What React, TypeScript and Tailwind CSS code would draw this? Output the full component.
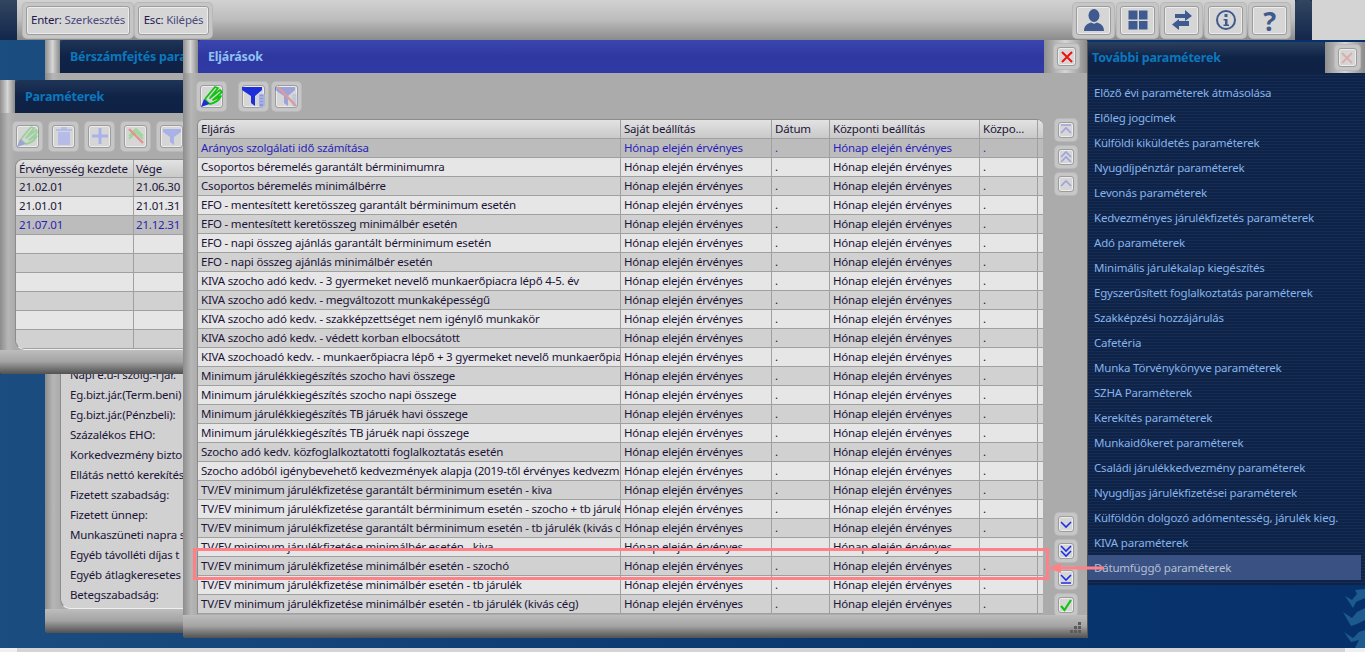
import type { ReactNode } from "react";

const font = "font-['Noto_Sans','Liberation_Sans',sans-serif] text-[11.5px] tracking-[-0.2px] leading-none";

const procedures = [
  "Arányos szolgálati idő számítása",
  "Csoportos béremelés garantált bérminimumra",
  "Csoportos béremelés minimálbérre",
  "EFO - mentesített keretösszeg garantált bérminimum esetén",
  "EFO - mentesített keretösszeg minimálbér esetén",
  "EFO - napi összeg ajánlás garantált bérminimum esetén",
  "EFO - napi összeg ajánlás minimálbér esetén",
  "KIVA szocho adó kedv. - 3 gyermeket nevelő munkaerőpiacra lépő 4-5. év",
  "KIVA szocho adó kedv. - megváltozott munkaképességű",
  "KIVA szocho adó kedv. - szakképzettséget nem igénylő munkakör",
  "KIVA szocho adó kedv. - védett korban elbocsátott",
  "KIVA szochoadó kedv. - munkaerőpiacra lépő + 3 gyermeket nevelő munkaerőpiacra",
  "Minimum járulékkiegészítés szocho havi összege",
  "Minimum járulékkiegészítés szocho napi összege",
  "Minimum járulékkiegészítés TB járuék havi összege",
  "Minimum járulékkiegészítés TB járuék napi összege",
  "Szocho adó kedv. közfoglalkoztatotti foglalkoztatás esetén",
  "Szocho adóból igénybevehető kedvezmények alapja (2019-től érvényes kedvezmények)",
  "TV/EV minimum járulékfizetése garantált bérminimum esetén - kiva",
  "TV/EV minimum járulékfizetése garantált bérminimum esetén - szocho + tb járulék",
  "TV/EV minimum járulékfizetése garantált bérminimum esetén - tb járulék (kivás cég)",
  "TV/EV minimum járulékfizetése minimálbér esetén - kiva",
  "TV/EV minimum járulékfizetése minimálbér esetén - szochó",
  "TV/EV minimum járulékfizetése minimálbér esetén - tb járulék",
  "TV/EV minimum járulékfizetése minimálbér esetén - tb járulék (kivás cég)",
];

const moreParams = [
  "Előző évi paraméterek átmásolása",
  "Előleg jogcímek",
  "Külföldi kiküldetés paraméterek",
  "Nyugdíjpénztár paraméterek",
  "Levonás paraméterek",
  "Kedvezményes járulékfizetés paraméterek",
  "Adó paraméterek",
  "Minimális járulékalap kiegészítés",
  "Egyszerűsített foglalkoztatás paraméterek",
  "Szakképzési hozzájárulás",
  "Cafetéria",
  "Munka Törvénykönyve paraméterek",
  "SZHA Paraméterek",
  "Kerekítés paraméterek",
  "Munkaidőkeret paraméterek",
  "Családi járulékkedvezmény paraméterek",
  "Nyugdíjas járulékfizetései paraméterek",
  "Külföldön dolgozó adómentesség, járulék kieg.",
  "KIVA paraméterek",
  "Dátumfüggő paraméterek",
];

const labels = [
  "Napi e.u-i szolg.-i jár.",
  "Eg.bizt.jár.(Term.beni)",
  "Eg.bizt.jár.(Pénzbeli):",
  "Százalékos EHO:",
  "Korkedvezmény bizto",
  "Ellátás nettó kerekítés",
  "Fizetett szabadság:",
  "Fizetett ünnep:",
  "Munkaszüneti napra s",
  "Egyéb távolléti díjas t",
  "Egyéb átlagkeresetes",
  "Betegszabadság:",
];

const validity = [
  ["21.02.01", "21.06.30"],
  ["21.01.01", "21.01.31"],
  ["21.07.01", "21.12.31"],
  ["", ""],
  ["", ""],
  ["", ""],
  ["", ""],
  ["", ""],
  ["", ""],
];

const Btn = ({ size, children }: { size: string; children?: ReactNode }) => (
  <div className={`${size} shrink-0 rounded-[4px] bg-[#c6c6c6] p-[3px] shadow-[0_0_0_1px_#b8b8b8]`}>
    <div className="flex h-full w-full items-center justify-center rounded-[3px] border border-[#9c9c9c] bg-[#d6d6d6] shadow-[inset_0_0_0_1px_#ececec]">
      {children}
    </div>
  </div>
);

const Pen = ({ faded }: { faded?: boolean }) => (
  <svg width="24" height="24" viewBox="0 0 24 24" fill="none" className={faded ? "opacity-30 shrink-0" : "shrink-0"}>
    <path d="M5 15 L15 3 L18 4 L10 14 L20 6 L22 8 L13 16 L21 12 C19 16 15 19 10 20" stroke="#12c312" strokeWidth="1.8" strokeLinejoin="round" />
    <path d="M5 15 C6 17 8 19 10 20" stroke="#12c312" strokeWidth="1.8" />
    <path d="M1 23 L4 15 L9.5 20 Z" fill="#1c2fd8" />
  </svg>
);

const Funnel = ({ faded }: { faded?: boolean }) => (
  <svg width="24" height="24" viewBox="0 0 24 24" className={faded ? "opacity-30 shrink-0" : "shrink-0"}>
    <path d="M0 3 H20 V6 L13 12 V22 L9 19 V12 L0 6 Z" fill="#1c2fd8" />
    <path d="M17 10 H22 V23 H17 Z M18 13 H21 M18 16 H21 M18 19 H21" fill="#8a98e0" stroke="#cfd4ee" strokeWidth="0.8" />
    {faded && <path d="M3 3 L21 22" stroke="#e81818" strokeWidth="2.4" />}
  </svg>
);

const Chevrons = ({ d, faded }: { d: string; faded?: boolean }) => (
  <svg width="16" height="16" viewBox="0 0 16 16" fill="none" className={faded ? "opacity-30 shrink-0" : "shrink-0"}>
    <path d={d} stroke="#1c2fe8" strokeWidth="1.6" />
  </svg>
);

const CloseIcon = ({ faded }: { faded?: boolean }) => (
  <svg width="14" height="14" viewBox="0 0 14 14" className={faded ? "opacity-20" : ""}>
    <path d="M2 2 L12 12 M12 2 L2 12" stroke="#f01010" strokeWidth="2" />
  </svg>
);

const scan =
  "bg-[repeating-linear-gradient(180deg,#0f2347_0px,#0f2347_2px,#152c56_2px,#152c56_3px)]";
const barGrad = "bg-gradient-to-b from-[#bdbdbd] via-[#a4a4a4] to-[#585858]";
const stripGrad = "bg-gradient-to-r from-[#8f8f8f] via-[#d6d6d6] to-[#8a8a8a]";
const bodyGrad = "bg-[linear-gradient(90deg,#8c8c8c,#b6b6b6_8px,#ababab_15px)]";

const WinTitle = ({ title, tone }: { title: string; tone: "blue" | "navy" }) => (
  <div className="flex h-[33px] shrink-0">
    <div className={`w-[15px] shrink-0 ${stripGrad}`} />
    <div
      className={`flex flex-1 items-center overflow-hidden rounded-tl-[4px] pt-[2px] pl-[10px] text-[12.5px] font-bold whitespace-nowrap ${
        tone === "blue"
          ? "bg-gradient-to-b from-[#3a46b0] via-[#2f389f] to-[#303aa6] text-[#8fc2f2]"
          : "bg-gradient-to-b from-[#1f3558] via-[#0f2347] to-[#0f2244] text-[#0b78bd]"
      }`}
    >
      {title}
    </div>
  </div>
);

const App = () => {
  return (
    <div className={`flex h-[652px] w-[1365px] flex-col overflow-hidden bg-gradient-to-r from-[#1b4d80] via-[#0c3a72] to-[#06306a] ${font}`}>
      {/* top toolbar */}
      <div className="flex h-[40px] shrink-0">
        <div className="w-[17px] shrink-0 rounded-tr-[3px] bg-gradient-to-b from-[#33455f] to-[#12274c]" />
        <div className="flex w-[1278px] items-center gap-[2px] bg-gradient-to-b from-[#d2d2d2] via-[#bcbcbc] to-[#8b8b8b] pr-[5px] pl-[6px] whitespace-nowrap">
          <Btn size="h-[35px] w-[110px]">
            <span className="text-[#22184e]">
              Enter: <span className="text-[#4a4a7c]">Szerkesztés</span>
            </span>
          </Btn>
          <Btn size="h-[35px] w-[77px]">
            <span className="text-[#22184e]">
              Esc: <span className="text-[#4a4a7c]">Kilépés</span>
            </span>
          </Btn>
          <div className="flex-1" />
          <div className="flex gap-[3px]">
            <Btn size="h-[35px] w-[41px]">
              <svg width="22" height="24" viewBox="0 0 22 24" fill="#3f5a8e">
                <ellipse cx="11" cy="7.5" rx="5.5" ry="6.5" />
                <path d="M1 23 C1 17 5 15.5 8 14.5 C10 16 12 16 14 14.5 C17 15.5 21 17 21 23 Z" />
              </svg>
            </Btn>
            <Btn size="h-[35px] w-[41px]">
              <svg width="20" height="20" viewBox="0 0 20 20" fill="#3f5a8e">
                <rect x="0.5" y="0.5" width="9" height="9" />
                <rect x="11" y="0.5" width="8.5" height="9" />
                <rect x="0.5" y="11" width="9" height="8.5" />
                <rect x="11" y="11" width="8.5" height="8.5" />
              </svg>
            </Btn>
            <Btn size="h-[35px] w-[41px]">
              <svg width="22" height="22" viewBox="0 0 22 22" fill="#3f5a8e">
                <path d="M4 5 H14 V1 L21 7 L14 12 V9 H4 Z" />
                <path d="M18 12 H8 V10 L1 15.5 L8 21 V17 H18 Z" />
              </svg>
            </Btn>
            <Btn size="h-[35px] w-[41px]">
              <svg width="22" height="22" viewBox="0 0 22 22" fill="none">
                <circle cx="11" cy="11" r="9" stroke="#3f5a8e" strokeWidth="2" />
                <rect x="9.5" y="5" width="3" height="3" fill="#3f5a8e" />
                <path d="M8.5 10 H12.5 V15.5 H14 V17 H8.5 V15.5 H10 V11.5 H8.5 Z" fill="#3f5a8e" />
              </svg>
            </Btn>
            <Btn size="h-[35px] w-[41px]">
              <span className="text-[27px] font-bold text-[#3f5a8e]">?</span>
            </Btn>
          </div>
        </div>
        <div className="w-[17px] shrink-0 rounded-t-[3px] bg-gradient-to-b from-[#33455f] to-[#12274c]" />
        <div className="flex-1 bg-[#d4d4d4]" />
      </div>

      {/* desktop with the floating windows */}
      <div className="relative flex-1">
        {/* background ornament, bottom right */}
        <svg width="22" height="60" viewBox="0 0 22 60" fill="#1d5a90" className="absolute top-[548px] right-0">
          <path d="M2 8 L9 12 L14 6 L12 2 L22 1 V10 L13 14 L10 20 Z" />
          <path d="M0 24 L9 30 L14 24 L22 20 V32 L14 36 L8 38 Z" />
          <path d="M1 44 L10 50 L16 44 L22 42 V60 L12 60 L16 52 L8 54 Z" />
        </svg>

        {/* Bérszámfejtés window */}
        <div className="absolute top-0 left-[45px] flex h-[592px] w-[300px] flex-col shadow-[1px_1px_0_#555]">
          <WinTitle title="Bérszámfejtés paraméterek" tone="navy" />
          <div className={`flex flex-1 flex-col pl-[15px] ${bodyGrad}`}>
            <div className="mt-[7px] flex flex-1 flex-col justify-end rounded-bl-[10px] border-b border-l border-b-[#efefef] border-l-[#8c8c8c] bg-[#d1d1d1] pb-[3px] pl-[9px]">
              {labels.map((l) => (
                <div key={l} className="flex h-[20px] items-center whitespace-nowrap text-[#1c1438]">
                  {l}
                </div>
              ))}
            </div>
          </div>
          <div className={`h-[23px] shrink-0 ${barGrad}`} />
        </div>

        {/* Paraméterek window */}
        <div className="absolute top-[40px] left-0 flex h-[293px] w-[300px] flex-col shadow-[1px_1px_0_#555]">
          <WinTitle title="Paraméterek" tone="navy" />
          <div className={`flex flex-1 flex-col pl-[15px] ${bodyGrad}`}>
            <div className="-ml-[2px] flex h-[46px] shrink-0 items-center gap-[7px]">
              <Btn size="h-[29px] w-[29px]"><Pen faded /></Btn>
              <Btn size="h-[29px] w-[29px]">
                <svg width="18" height="20" viewBox="0 0 18 20" fill="#b5bce8">
                  <path d="M1 3 H17 V5 H1 Z M6 1 H12 V3 H6 Z M3 6 H15 V19 H3 Z" />
                </svg>
              </Btn>
              <Btn size="h-[29px] w-[29px]">
                <svg width="18" height="18" viewBox="0 0 18 18" fill="#a9b2e8">
                  <path d="M7.5 1 H10.5 V7.5 H17 V10.5 H10.5 V17 H7.5 V10.5 H1 V7.5 H7.5 Z" />
                </svg>
              </Btn>
              <Btn size="h-[29px] w-[29px]">
                <svg width="20" height="20" viewBox="0 0 20 20" fill="none">
                  <path d="M3 10 L10 3 L17 10 M3 13 L10 6 L17 13" stroke="#9fd89f" strokeWidth="2" />
                  <path d="M3 3 L17 17" stroke="#e88f8f" strokeWidth="2.4" />
                </svg>
              </Btn>
              <Btn size="h-[29px] w-[29px]">
                <svg width="20" height="20" viewBox="0 0 20 20" fill="#a9b2e8">
                  <path d="M1 3 H19 V6 L12 11 V19 L8 16 V11 L1 6 Z" />
                </svg>
              </Btn>
            </div>
            <div className="flex-1 overflow-hidden rounded-tl-[8px] rounded-bl-[10px] border-t border-b border-l border-t-[#8c8c8c] border-b-[#efefef] border-l-[#8c8c8c] bg-[#d1d1d1]">
              <div className="grid h-[18px] grid-cols-[118px_1fr] bg-gradient-to-b from-[#e2e2e2] to-[#c8c8c8] whitespace-nowrap text-[#1c1438]">
                <div className="flex items-center border-r border-b border-[#a0a0a0] pl-[3px]">Érvényesség kezdete</div>
                <div className="flex items-center border-b border-[#a0a0a0] pl-[2px]">Vége</div>
              </div>
              {validity.map((r, i) => (
                <div
                  key={i}
                  className={`grid h-[19px] grid-cols-[118px_1fr] ${
                    i === 2 ? "bg-[#bcbcbc] text-[#2a1fb8]" : i % 2 === 0 ? "bg-[#d1d1d1] text-[#1c1438]" : "bg-[#e6e6e6] text-[#1c1438]"
                  }`}
                >
                  <div className="flex items-center border-r border-b border-[#a0a0a0] pl-[3px]">{r[0]}</div>
                  <div className="flex items-center border-b border-[#a0a0a0] pl-[2px]">{r[1]}</div>
                </div>
              ))}
            </div>
          </div>
          <div className={`h-[23px] shrink-0 ${barGrad}`} />
        </div>

        {/* Eljárások window */}
        <div className="absolute top-0 left-[183px] flex h-[597px] w-[904px] flex-col shadow-[1px_1px_0_#555]">
          <div className="flex h-[33px] shrink-0">
            <div className="flex-1 overflow-hidden">
              <WinTitle title="Eljárások" tone="blue" />
            </div>
            <div className={`flex w-[43px] shrink-0 items-center justify-center pl-[2px] ${stripGrad}`}>
              <Btn size="h-[25px] w-[25px]"><CloseIcon /></Btn>
            </div>
          </div>
          <div className={`flex flex-1 pl-[14px] ${bodyGrad}`}>
            <div className="flex w-[846px] flex-col">
              <div className="flex h-[46px] shrink-0 items-center">
                <Btn size="h-[29px] w-[29px]"><Pen /></Btn>
                <div className="w-[13px]" />
                <Btn size="h-[29px] w-[29px]"><Funnel /></Btn>
                <div className="w-[4px]" />
                <Btn size="h-[29px] w-[29px]"><Funnel faded /></Btn>
              </div>
              <div className="overflow-hidden rounded-tl-[6px] rounded-tr-[6px] border-t border-l border-[#8c8c8c] whitespace-nowrap text-[#1c1438]">
                <div className="grid h-[19px] grid-cols-[423px_151px_58px_150px_58px_6px] bg-gradient-to-b from-[#e2e2e2] to-[#c8c8c8]">
                  {["Eljárás", "Saját beállítás", "Dátum", "Központi beállítás", "Közpo...", ""].map((h, i) => (
                    <div key={i} className="flex items-center border-r border-b border-[#a0a0a0] pl-[3px]">{h}</div>
                  ))}
                </div>
                {procedures.map((p, i) => (
                  <div
                    key={p}
                    className={`grid h-[19px] grid-cols-[423px_151px_58px_150px_58px_6px] ${
                      i === 0 ? "bg-[#bcbcbc] text-[#2a1fb8]" : i % 2 === 1 ? "bg-[#e6e6e6]" : "bg-[#d1d1d1]"
                    }`}
                  >
                    <div className="flex items-center overflow-hidden border-r border-b border-[#a0a0a0] pl-[3px]">{p}</div>
                    <div className="flex items-center border-r border-b border-[#a0a0a0] pl-[3px]">Hónap elején érvényes</div>
                    <div className="flex items-center border-r border-b border-[#a0a0a0] pl-[3px]">.</div>
                    <div className="flex items-center border-r border-b border-[#a0a0a0] pl-[3px]">Hónap elején érvényes</div>
                    <div className="flex items-center border-r border-b border-[#a0a0a0] pl-[3px]">.</div>
                    <div className="border-r border-b border-[#a0a0a0]" />
                  </div>
                ))}
              </div>
            </div>
            <div className="-mb-[1px] flex flex-1 flex-col items-center pt-[46px] pl-[2px]">
              <div className="flex flex-col gap-[5px]">
                <Btn size="h-[22px] w-[22px]"><Chevrons faded d="M3 3 H13 M3 11 L8 6 L13 11" /></Btn>
                <Btn size="h-[22px] w-[22px]"><Chevrons faded d="M3 8 L8 3 L13 8 M3 13 L8 8 L13 13" /></Btn>
                <Btn size="h-[22px] w-[22px]"><Chevrons faded d="M3 10 L8 5 L13 10" /></Btn>
              </div>
              <div className="flex-1" />
              <div className="flex flex-col gap-[5px]">
                <Btn size="h-[22px] w-[22px]"><Chevrons d="M3 6 L8 11 L13 6" /></Btn>
                <Btn size="h-[22px] w-[22px]"><Chevrons d="M3 3 L8 8 L13 3 M3 8 L8 13 L13 8" /></Btn>
                <Btn size="h-[22px] w-[22px]"><Chevrons d="M3 5 L8 10 L13 5 M3 13 H13" /></Btn>
                <Btn size="h-[22px] w-[22px]">
                  <svg width="16" height="16" viewBox="0 0 16 16" fill="none" className="shrink-0">
                    <path d="M3 9 L6.5 13 L13 3" stroke="#12c312" strokeWidth="2.2" />
                  </svg>
                </Btn>
              </div>
            </div>
          </div>
          <div className={`relative h-[22px] shrink-0 ${barGrad}`}>
            <svg width="12" height="12" viewBox="0 0 12 12" fill="#5c5c5c" className="absolute right-[5px] bottom-[3px]">
              <path d="M8 0 H11 V3 H8 Z M4 4 H7 V7 H4 Z M8 4 H11 V7 H8 Z M0 8 H3 V11 H0 Z M4 8 H7 V11 H4 Z M8 8 H11 V11 H8 Z" />
            </svg>
          </div>
        </div>

        {/* További paraméterek panel */}
        <div className="absolute top-[2px] left-[1088px] flex h-[543px] w-[277px] flex-col">
          <div className="flex h-[31px] shrink-0">
            <div className="flex flex-1 items-center rounded-tr-[3px] bg-gradient-to-b from-[#2b3f60] via-[#0f2347] to-[#0f2244] pt-[2px] pl-[4px] text-[12.5px] font-bold text-[#0b78bd]">
              További paraméterek
            </div>
            <div className={`flex w-[40px] shrink-0 items-center justify-center pl-[4px] ${stripGrad}`}>
              <Btn size="h-[25px] w-[25px]"><CloseIcon faded /></Btn>
            </div>
          </div>
          <div className={`flex-1 pt-[7px] ${scan}`}>
            {moreParams.map((m, i) => (
              <div
                key={m}
                className={`flex h-[25px] items-center whitespace-nowrap pl-[6px] ${
                  i === 19 ? "mr-[4px] bg-[#3a5283] text-[#b4bfd4]" : "text-[#85b3ea]"
                }`}
              >
                {m}
              </div>
            ))}
          </div>
        </div>

        {/* callout drawn over the screenshot */}
        <div className="absolute top-[508px] left-[193px] h-[32px] w-[856px] border-[3px] border-[#ff8086]" />
        <svg width="58" height="12" viewBox="0 0 58 12" className="absolute top-[522px] left-[1048px]">
          <path d="M0 6 L13 1 V4.5 H56 V7.5 H13 V11 Z" fill="#ff8086" />
        </svg>
      </div>

      <div className="flex h-[4px] shrink-0">
        <div className="w-[17px] bg-[#f0f0f0]" />
        <div className="flex-1 bg-[#d4d4d4]" />
        <div className="w-[20px] bg-[#f0f0f0]" />
      </div>
    </div>
  );
};

export default App;
